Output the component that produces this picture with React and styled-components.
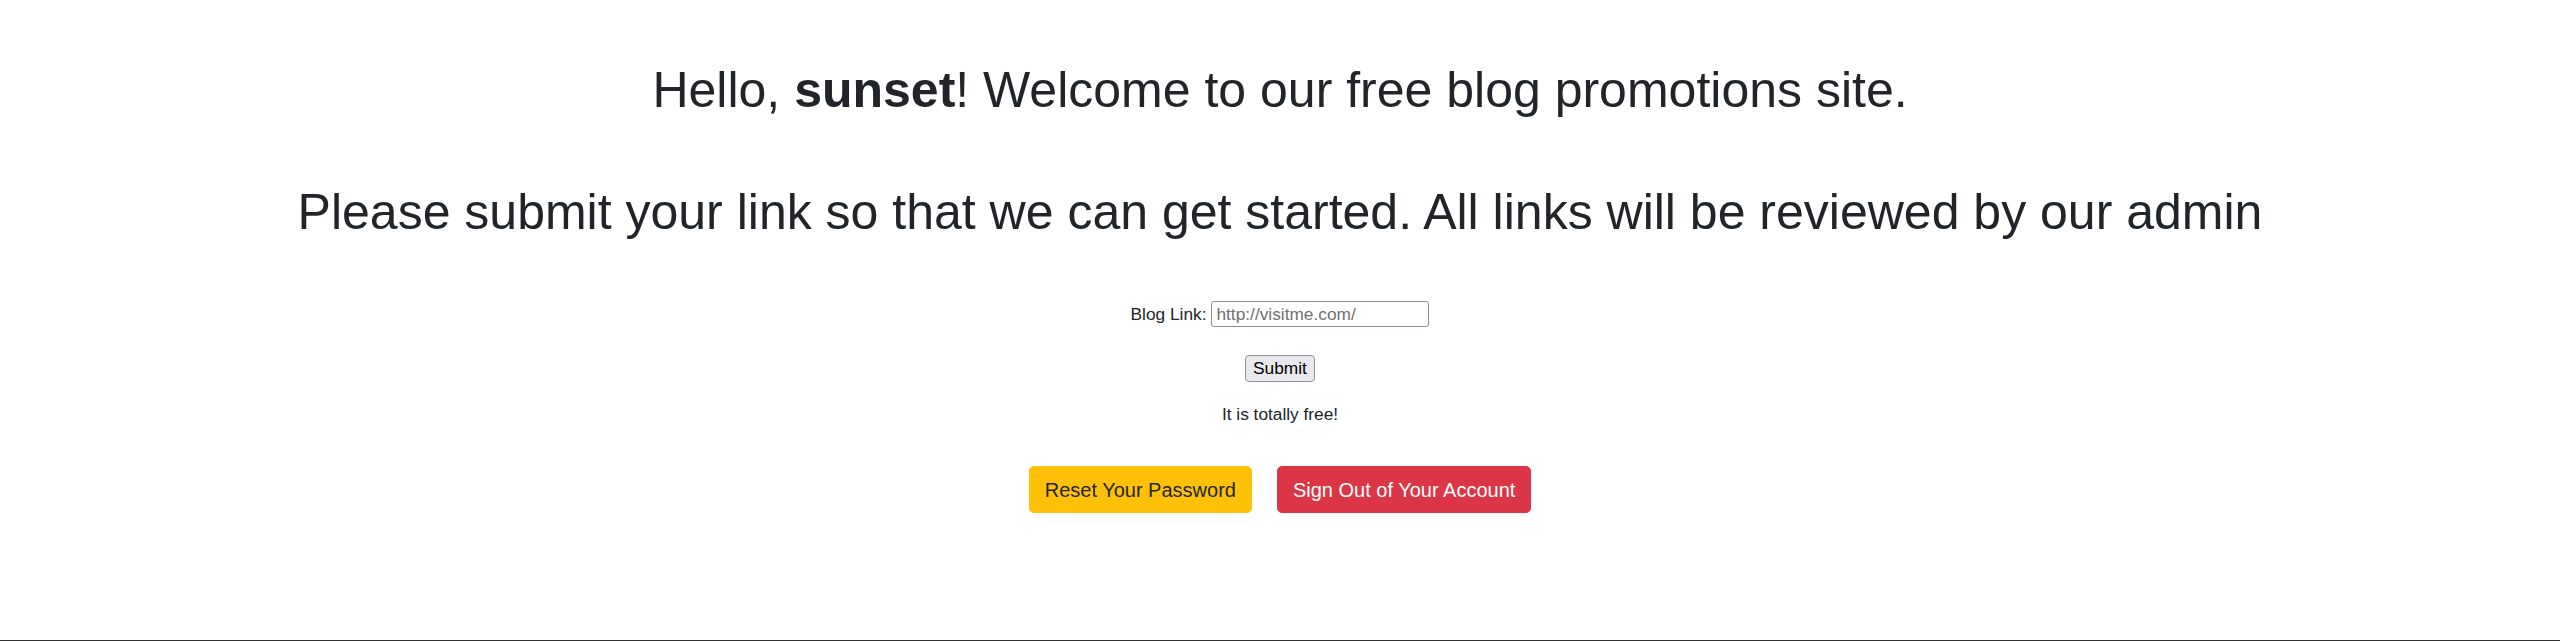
import styled, { createGlobalStyle } from "styled-components";

const GlobalStyle = createGlobalStyle`
  * {
    box-sizing: border-box;
  }
  body {
    margin: 0;
    background: #fff;
    color: #212529;
    font-family: "Liberation Sans", Arial, sans-serif;
  }
`;

const Page = styled.div`
  height: 641px;
  border-bottom: 1px solid #333;
  overflow: hidden;
`;

const Main = styled.main`
  display: flex;
  flex-direction: column;
  align-items: center;
  padding-top: 60px;
`;

const Heading = styled.h1`
  margin: 0;
  margin-top: ${(p) => (p.$spaced ? "62px" : "0")};
  font-size: 50px;
  line-height: 60px;
  font-weight: 400;
  text-align: center;

  b {
    font-weight: 700;
  }
`;

const Form = styled.form`
  display: flex;
  flex-direction: column;
  align-items: center;
  margin-top: 59px;
  font-size: 17.3px;
`;

const FieldRow = styled.div`
  display: flex;
  align-items: center;
  gap: 5px;
  height: 26px;
`;

const Label = styled.label`
  line-height: 20px;
`;

const LinkInput = styled.input`
  width: 218px;
  height: 26px;
  padding: 0 4px;
  border: 1px solid #8f8f9d;
  border-radius: 3px;
  font-family: inherit;
  font-size: 17.3px;
  color: #212529;

  &::placeholder {
    color: #707070;
  }
`;

const SubmitButton = styled.button`
  margin-top: 28px;
  height: 27px;
  padding: 0 7px;
  background: #e9e9ed;
  border: 1px solid #8f8f9d;
  border-radius: 4px;
  font-family: inherit;
  font-size: 17.3px;
  color: #000;
`;

const Note = styled.p`
  margin: 22px 0 0;
  line-height: 20px;
`;

const Actions = styled.div`
  display: flex;
  gap: 25px;
  margin-top: 42px;
`;

const ActionButton = styled.button`
  height: 47px;
  padding: 0 15px;
  border: 1px solid ${(p) => (p.$tone === "danger" ? "#dc3545" : "#ffc107")};
  border-radius: 5px;
  background: ${(p) => (p.$tone === "danger" ? "#dc3545" : "#ffc107")};
  color: ${(p) => (p.$tone === "danger" ? "#fff" : "#212529")};
  font-family: inherit;
  font-size: 20px;
  line-height: 30px;
`;

const App = () => {
  return (
    <Page>
      <GlobalStyle />
      <Main>
        <Heading>
          Hello, <b>sunset</b>! Welcome to our free blog promotions site.
        </Heading>
        <Heading as="h2" $spaced>
          Please submit your link so that we can get started. All links will be reviewed by our admin
        </Heading>
        <Form onSubmit={(e) => e.preventDefault()}>
          <FieldRow>
            <Label htmlFor="blog-link">Blog Link:</Label>
            <LinkInput id="blog-link" type="text" placeholder="http://visitme.com/" />
          </FieldRow>
          <SubmitButton type="submit">Submit</SubmitButton>
          <Note>It is totally free!</Note>
        </Form>
        <Actions>
          <ActionButton $tone="warning">Reset Your Password</ActionButton>
          <ActionButton $tone="danger">Sign Out of Your Account</ActionButton>
        </Actions>
      </Main>
    </Page>
  );
};

export default App;
